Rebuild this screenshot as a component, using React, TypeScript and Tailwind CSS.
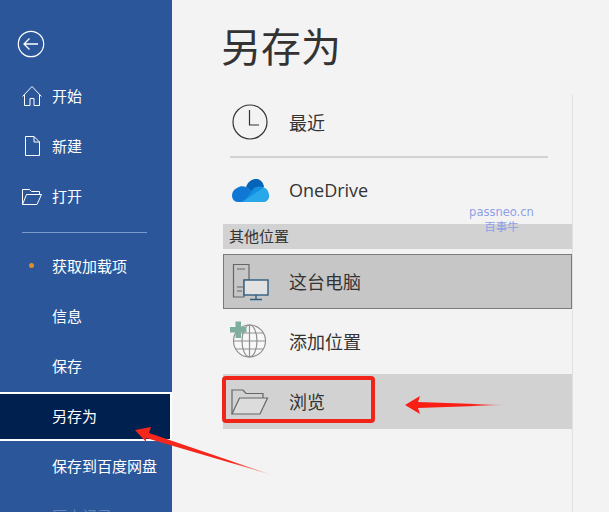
const cjk = "font-['Noto_Sans_CJK_SC','Noto_Sans',sans-serif]";

function BackIcon() {
    return (
        <svg width="28" height="28" viewBox="0 0 28 28" fill="none" stroke="#fff" strokeWidth="1.2" className="ml-[17px]">
            <circle cx="14" cy="14" r="12.7" />
            <path d="M7 14H21M12.5 8.5L7 14L12.5 19.5" strokeWidth="1.3" />
        </svg>
    );
}

function HomeIcon() {
    return (
        <svg width="22" height="22" viewBox="0 0 22 22" fill="none" stroke="#fff" strokeWidth="1">
            <path d="M1.5 11.5L11 1.5L20.500 11.500M3.500 10V20.500H9V13.500H13V20.500H18.500V10" />
        </svg>
    );
}

function FileIcon() {
    return (
        <svg width="22" height="22" viewBox="0 0 22 22" fill="none" stroke="#fff" strokeWidth="1">
            <path d="M4.500 1.500V20.500H18.500V7L13 1.500ZM13 1.500V7H18.500" />
        </svg>
    );
}

function OpenIcon() {
    return (
        <svg width="22" height="22" viewBox="0 0 22 22" fill="none" stroke="#fff" strokeWidth="1">
            <path d="M1.500 19.500V4.500H8.500L10.500 6.500H18.500V9.500M1.500 19.500H16L20.500 9.500H5.500L1.500 19.500Z" />
        </svg>
    );
}

function BrowseIcon() {
    return (
        <svg width="38" height="26" viewBox="0 0 38 26" fill="none" stroke="#666" strokeWidth="1.2">
            <path d="M1 25V1H12L15 4.500H32V9" />
            <path d="M1 25H29L36.500 9H8.500Z" fill="#dcdcdc" />
        </svg>
    );
}

function ClockIcon() {
    return (
        <svg width="36" height="36" viewBox="0 0 36 36" fill="none" stroke="#333" strokeWidth="1.200">
            <circle cx="18" cy="18" r="17" />
            <path d="M17.500 6V21H27" />
        </svg>
    );
}

function CloudIcon() {
    return (
        <svg width="37" height="25" viewBox="0 0 37 25">
            <path d="M14 9C16 3 21 0.500 25 1C29 1.500 31.500 5 32 9L22 15Z" fill="#0364b8" />
            <path d="M5 10C8 8 11 8 14 9L24 15L14 24H6C2 24 0 20.500 0 17.500C0 14 2 11.500 5 10Z" fill="#0f78d4" />
            <path d="M22 10C25 8 29 8 31.500 9.500L37 17C37 21 35 24 31 24H12Z" fill="#1490df" />
            <path d="M32 9.500C35 10.500 37 14 37 17.500C37 21.500 34 24 31 24H8C10 24 12 23 13.500 21.500Z" fill="#28a8ea" />
        </svg>
    );
}

function PcIcon() {
    return (
        <svg width="38" height="38" viewBox="-1 0 38 38" fill="none" className="overflow-visible">
            <path d="M1.500 1.500H17V17H12V34H1.500Z" stroke="#666" strokeWidth="1.200" />
            <path d="M5 6H13M5 24H11M5 28H10" stroke="#666" strokeWidth="1" />
            <rect x="12" y="17" width="24" height="15" fill="#e2e2e2" stroke="#2f5f80" strokeWidth="1.400" />
            <path d="M24 32V36M18 36.500H30" stroke="#2f5f80" strokeWidth="1.400" />
        </svg>
    );
}

function GlobeIcon() {
    return (
        <svg width="38" height="38" viewBox="2.500 2.500 38 38" fill="none" className="overflow-visible">
            <g stroke="#8f8f8f" strokeWidth="1.200">
                <circle cx="21" cy="20.500" r="16" fill="#f8f8f8" />
                <ellipse cx="21" cy="20.500" rx="7.500" ry="16" />
                <path d="M21 4.500V36.500M5 20.500H37M7.500 12.500H34.500M7.500 28.500H34.500" />
            </g>
            <path d="M7 1H12.500V6.500H18V12H12.500V17.500H7V12H1.500V6.500H7Z" fill="#7fad9f" />
        </svg>
    );
}

function NavItem({ label, dot, selected, faded }: { label: string; dot?: boolean; selected?: boolean; faded?: boolean }) {
    return (
        <div
            className={`relative flex items-center pl-[52px] text-[15px] ${
                selected ? "mt-px h-[49px] border-y-2 border-r-2 border-white bg-[#002050]" : "h-[50px]"
            } ${faded ? "text-[#5f81b5]" : "text-white"}`}
        >
            {dot && <span className="absolute left-[29px] top-[22px] h-[5px] w-[5px] rounded-full bg-[#e08a2a]" />}
            {label}
        </div>
    );
}

function IconNavItem({ label, icon }: { label: string; icon: React.ReactNode }) {
    return (
        <div className="flex h-[50px] items-center pl-[21px] text-[15px] text-white">
            <span className="mr-[9px] flex w-[22px] justify-center">{icon}</span>
            {label}
        </div>
    );
}

function PlaceRow({ label, icon, className = "h-[55px]", latin }: { label: string; icon: React.ReactNode; className?: string; latin?: boolean }) {
    return (
        <div className={`flex items-center text-[18px] text-[#333] ${className}`}>
            <span className="ml-[8px] flex w-[38px] justify-center">{icon}</span>
            <span className={`ml-[20px] ${latin ? "font-['Open_Sans',sans-serif]" : ""}`}>{label}</span>
        </div>
    );
}

export default function App() {
    return (
        <div className={`relative flex h-[512px] w-[609px] overflow-hidden bg-[#f3f3f3] ${cjk}`}>
            {/* Sidebar */}
            <aside className="h-full w-[172px] shrink-0 bg-[#2b579a]">
                <div className="mb-[13px] pt-[30px]">
                    <BackIcon />
                </div>
                <IconNavItem label="开始" icon={<HomeIcon />} />
                <IconNavItem label="新建" icon={<FileIcon />} />
                <IconNavItem label="打开" icon={<OpenIcon />} />
                <div className="ml-[22px] mb-[8px] mt-[11px] h-px w-[125px] bg-[#7c9ccd]" />
                <NavItem label="获取加载项" dot />
                <NavItem label="信息" />
                <NavItem label="保存" />
                <NavItem label="另存为" selected />
                <NavItem label="保存到百度网盘" />
                <NavItem label="历史记录" faded />
            </aside>

            {/* Main */}
            <main className="flex h-full flex-1 flex-col pl-[51px]">
                <h1 className="-ml-[2px] flex h-[95px] shrink-0 items-center pb-[5px] text-[40px] font-normal text-[#333]">另存为</h1>
                <div className="w-[350px] flex-1 border-r border-[#e1e1e1]">
                    <PlaceRow label="最近" icon={<ClockIcon />} className="h-[54px]" />
                    <div className="ml-[7px] mt-[7px] h-[2px] w-[318px] bg-[#d2d2d2]" />
                    <div className="mt-[5px]" />
                    <PlaceRow label="OneDrive" icon={<CloudIcon />} latin />
                    <div className="mt-[6px] flex h-[25px] items-center bg-[#d2d2d2] pl-[6px] text-[15px] text-[#333]">其他位置</div>
                    <PlaceRow
                        label="这台电脑"
                        icon={<PcIcon />}
                        className="mt-[5px] h-[55px] bg-[#c6c6c6] outline outline-1 -outline-offset-1 outline-[#7a7a7a]"
                    />
                    <PlaceRow label="添加位置" icon={<GlobeIcon />} className="mt-[5px] h-[55px]" />
                    <PlaceRow label="浏览" icon={<BrowseIcon />} className="mt-[5px] h-[55px] bg-[#d2d2d2]" />
                </div>
            </main>

            {/* Annotations */}
            <div className="absolute left-[222px] top-[376px] h-[47px] w-[153px] rounded-[4px] border-4 border-[#f02418]" />
            <svg className="absolute left-0 top-0" width="609" height="512" viewBox="0 0 609 512">
                <defs>
                    <linearGradient id="a1" x1="135" y1="429" x2="272" y2="475" gradientUnits="userSpaceOnUse">
                        <stop offset="0.1" stopColor="#f5261c" />
                        <stop offset="0.7" stopColor="#f5261c" />
                        <stop offset="1" stopColor="#f5261c" stopOpacity="0.15" />
                    </linearGradient>
                    <linearGradient id="a2" x1="405" y1="405" x2="505" y2="405" gradientUnits="userSpaceOnUse">
                        <stop offset="0.2" stopColor="#fa1e14" />
                        <stop offset="0.65" stopColor="#fa1e14" />
                        <stop offset="1" stopColor="#fa1e14" stopOpacity="0.1" />
                    </linearGradient>
                </defs>
                <polygon points="135,430 151,427 149,433 272,475 146,438 146,442" fill="url(#a1)" />
                <polygon points="405,405 420,396 418,402 505,405 418,408 420,414" fill="url(#a2)" />
            </svg>

            {/* Watermark */}
            <div className="absolute left-[469px] top-[205px] w-[65px] text-center text-[11.5px] leading-[14px] text-[#8f9fe8]">
                <div className="font-['DejaVu_Sans',sans-serif]">passneo.cn</div>
                <div>百事牛</div>
            </div>
        </div>
    );
}
